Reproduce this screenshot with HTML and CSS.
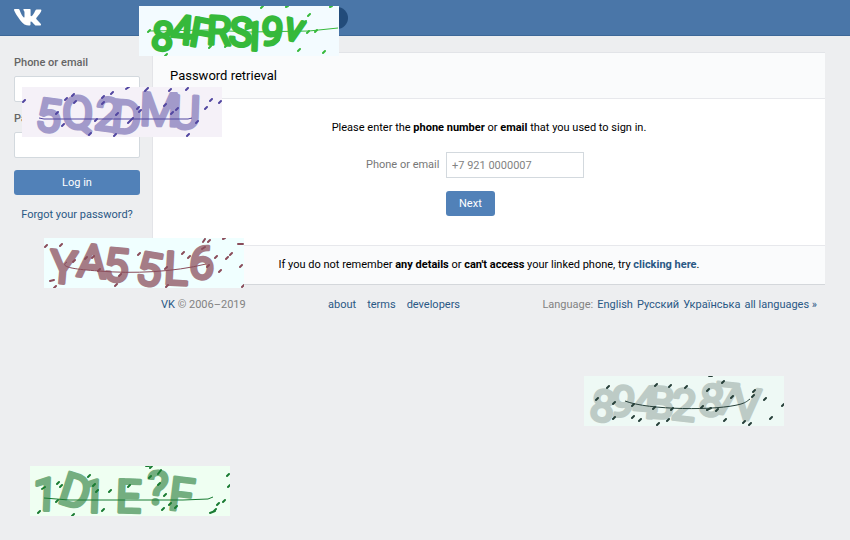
FILE: index.html
```
<!DOCTYPE html>
<html lang="en">
<head>
<meta charset="utf-8">
<title>Password retrieval | VK</title>
<link rel="stylesheet" href="styles.css">
</head>
<body>
<header class="topbar">
  <a class="logo" href="#" aria-label="VK"><svg width="28" height="17" viewBox="0 0 28 17"><path fill="#fff" d="M.5 0h4c.6 0 .8.3 1 .8C7 5 9 8.500 10 8.500c.4 0 .5-.3.5-1.500V3.500C10.400 1.500 9.300 1.300 9.300.7c0-.4.3-.7.8-.7h5.700c.6 0 .8.300.8 1v5.500c0 .6.3.8.5.8.4 0 .7-.2 1.300-.8 1.800-2 3.100-5.200 3.100-5.200.2-.4.500-.8 1.200-.8h3.500c1.100 0 1.300.5 1.100 1.200-.5 2.100-4.800 7-4.800 7-.4.600-.5.900 0 1.500l4.200 4.500c.8 1 .2 1.900-.8 1.900h-3.900c-.7 0-1.100-.4-1.900-1.300-1.400-1.500-2.300-2.700-3.100-2.700-.4 0-.5.100-.5.800v2.200c0 .7-.2 1-1.700 1-2.800 0-6-1.700-8.200-4.900C3.300 7.100.100 2.200.100.900.100.400.1 0 .5 0z"/></svg></a>
  <input class="search" type="search" aria-label="Search">
</header>
<div class="page">
  <aside class="sidebar">
    <form class="login">
      <label for="login">Phone or email</label>
      <input id="login" type="text">
      <label for="pass">Password</label>
      <input id="pass" type="password">
      <button class="button" type="button">Log in</button>
      <a href="#">Forgot your password?</a>
    </form>
  </aside>
  <div class="content">
    <main class="card">
      <h1>Password retrieval</h1>
      <form class="restore">
        <p>Please enter the <b>phone number</b> or <b>email</b> that you used to sign in.</p>
        <div class="fields">
          <label for="contact">Phone or email</label>
          <input id="contact" type="text" placeholder="+7 921 0000007">
          <button class="button" type="button">Next</button>
        </div>
      </form>
      <p class="hint">If you do not remember <b>any details</b> or <b>can't access</b> your linked phone, try <a href="#">clicking here</a>.</p>
    </main>
    <footer class="footer">
      <div><a href="#">VK</a> © 2006–2019</div>
      <nav class="links"><a href="#">about</a><a href="#">terms</a><a href="#">developers</a></nav>
      <div class="languages"><span>Language:</span><a href="#">English</a><a href="#">Русский</a><a href="#">Українська</a><a href="#">all languages »</a></div>
    </footer>
  </div>
</div>

<svg class="captcha green" viewBox="0 0 200 50">
  <text y="43 37 39 38 39 44 38 32" x="11 31 49 67 89 103 120 143" rotate="6 5 10 3 5 2 8 15">84FRS19v</text>
  <path class="wire" d="M10 25L70 24 110 26 170 25 199 22"/>
  <path class="dots" d="M9 26l2-2M26 50l2-2M70 42l2-2M86 41l2-2M122 2l2-2M147 1l2-1M191 1l2-1M169 10l2-2M165 17l2-2M168 27l2-2M176 26l2-2M137 30l2-2M138 36l2-2M159 45l2-2M184 47l2-2"/>
</svg>
<svg class="captcha violet" viewBox="0 0 200 50">
  <text y="43 42 42 45 38 41" x="12 40 71 88 117 148" rotate="7 0 7 5 2 2">5Q2DMU</text>
  <path class="wire" d="M17 31l5 1H166l4-1"/>
  <path class="dots" d="M1 15l2-2M34 27l2-2M40 39l2-2M43 13l2-2M50 9l2-2M52 16l2-2M67 48l2-2M73 34l2-2M80 17l2-2M80 11l2-2M89 7l2-2M92 49l2-2M94 28l2-2M104 2l3-2M106 36l5-5M115 22l2-2M117 25l2-2M123 4l3-3M142 19l2-2M147 4l2-2M149 27l2-2M154 23l2-2M164 3l2-2M165 49l2-2M174 36l2-2M183 22l2-2M188 14l2-2M197 16l2-2"/>
</svg>
<svg class="captcha red" viewBox="0 0 200 50">
  <text y="44 38 42 45 46 40" x="4 32 58 90 119 144" rotate="5 5 5 10 3 3">YA55L6</text>
  <path class="wire" d="M23 24c-7 4 1 7 32 9 34 3 75 1 107-7"/>
  <path class="dots" d="M1 9l2-2M6 43l4-1M16 8l2-2M29 24l2-2M41 21l2-2M48 20l2-2M54 33l2-2M71 48l2-2M75 38l2-2M94 17l2-2M121 31l2-2M122 49l2-2M138 16l2-2M144 20l2-2M158 11l3-2M159 4l2-3M164 4l2-2M163 29l2-2M171 20l2-2M175 34l2-2M179 1l2-1M182 21l2-2M186 17l2-2M194 6h5M196 29l2-2M198 49l2-2M10 50l2-2"/>
</svg>
<svg class="captcha gray" viewBox="0 0 200 50">
  <text y="43 39 41 41 43 38 37 43" x="4 24 48 62 86 113 129 148" rotate="10 10 4 5 6 8 6 4">894B287V</text>
  <path class="wire" d="M41 25c23 9 92 10 116 3 6-2 6-3 9-5"/>
  <path class="dots" d="M12 24l2-2M23 12l2-2M29 28l2-2M29 43l2-2M48 30l2-2M48 42l2-2M55 45l2-2M69 33l2-2M71 10l2-2M73 49l2-2M83 45l2-2M85 11l2-2M87 34l2-2M101 12l2-2M117 32l2-2M123 15l2-2M123 34l4-2M125 0h3M132 35l2-2M138 7l2-2M140 45l2-2M147 22l2-2M159 47l2-2M165 49l2-2M168 21l2-2M169 16l2-2M180 24l2-2M186 43l2-2M198 30l2-2"/>
</svg>
<svg class="captcha mint" viewBox="0 0 200 50">
  <text y="44 36 46 46 37 43" x="2 26 50 85 115 137" rotate="2 18 2 2 5 7">1D1E?F</text>
  <path class="wire" d="M14 32l25 2H153l25-1 5-2"/>
  <path class="dots" d="M8 47l2-2M12 23l3-2M27 18l2-2M30 21l2-2M26 36l2-2M42 50l2-2M58 11l2-2M63 20l2-2M66 26l2-2M72 45l2-2M79 26l2-2M98 21l2-2M116 0h3M120 2l2-2M119 12l2-2M128 8l3-4M128 19l2-2M132 44l2-2M134 30l2-2M139 39l2-2M145 42l2-2M180 47l5-2M184 45l2-2M187 39l2-2M193 36l2-2M197 10l2-2M198 21l2-2"/>
</svg>
</body>
</html>
```
FILE: styles.css
```
* { box-sizing: border-box; }

body {
  margin: 0;
  min-height: 100vh;
  background: #edeef0;
  color: #000;
  font: 11px/16px Roboto, "Open Sans", sans-serif;
  position: relative;
}

a { color: #2a5885; text-decoration: none; }
b, .hint a { font-weight: 700; }
p { margin: 0; }

input {
  height: 26px;
  padding: 0 5px;
  border: 1px solid #d3d9de;
  background: #fff;
  font: inherit;
}

input::placeholder { color: #828282; opacity: 1; }

.topbar {
  display: flex;
  align-items: center;
  height: 36px;
  padding: 0 14px;
  background: #4a76a8;
  border-bottom: 1px solid #3d6898;
}

.logo { display: flex; width: 139px; }

.search {
  width: 195px;
  height: 22px;
  border: 0;
  border-radius: 11px;
  background: #224b7a;
}

.page {
  display: flex;
  gap: 13px;
  padding: 16px 25px 0 14px;
}

.sidebar { width: 126px; flex: none; padding-top: 3px; }

.login { display: flex; flex-direction: column; }
.login label { margin-bottom: 5px; color: #656565; font-weight: 500; }
.login input { width: 100%; margin-bottom: 9px; border-radius: 2px; }
.login a { margin-top: 12px; text-align: center; }

.button {
  height: 25px;
  padding: 0 13px;
  border: 0;
  border-radius: 3px;
  background: #5181b8;
  color: #fff;
  font: inherit;
}

.login .button { margin-top: 3px; }

.content { flex: 1; min-width: 0; }

.card {
  background: #fff;
  border: 1px solid #e2e4e8;
  border-width: 1px 0;
  border-bottom-color: #d4d7db;
  box-shadow: -1px 0 #e3e4e8;
}

h1 {
  margin: 0;
  padding: 15px 17px 14px;
  border-bottom: 1px solid #e7e8ec;
  background: #fafbfc;
  font-size: 13px;
  font-weight: 400;
  line-height: 16px;
}

.restore { padding: 21px 0 29px; text-align: center; }

.fields {
  display: grid;
  grid-template-columns: 72px 138px;
  gap: 13px 8px;
  justify-content: center;
  align-items: center;
  margin: 16px 28px 0 0;
}

.fields label { color: #777; white-space: nowrap; }
.fields .button { grid-column: 2; justify-self: start; }

.hint {
  padding: 11px 0;
  border-top: 1px solid #e7e8ec;
  background: #fafbfc;
  text-align: center;
}

.footer {
  display: flex;
  justify-content: space-between;
  padding: 12px 8px;
  color: #828282;
}

.links { display: flex; gap: 11px; }
.languages { display: flex; gap: 4px; }

.captcha {
  position: absolute;
  width: 200px;
  height: 50px;
  overflow: hidden;
}

.captcha text {
  fill: currentColor;
  stroke: currentColor;
  stroke-width: 3px;
  stroke-linejoin: round;
  font: 46px Roboto, sans-serif;
}

.green text { font-size: 40px; }
.gray text { font-size: 44px; }

.wire, .dots { fill: none; stroke: var(--ink); }
.dots { stroke-width: 2px; stroke-linecap: round; }

.green { left: 139px; top: 6px; background: #f3fbff; color: #36b93b; --ink: #36b93b; }
.violet { left: 22px; top: 87px; background: #f5f1f8; color: #a29aca; --ink: #5146a0; }
.red { left: 44px; top: 238px; background: #f0ffff; color: #a57c86; --ink: #8a4c5a; }
.gray { left: 584px; top: 376px; background: #eef9f5; color: #bdcbc6; --ink: #263f39; }
.mint { left: 30px; top: 466px; background: #effff2; color: #74ae80; --ink: #197b32; }
```
